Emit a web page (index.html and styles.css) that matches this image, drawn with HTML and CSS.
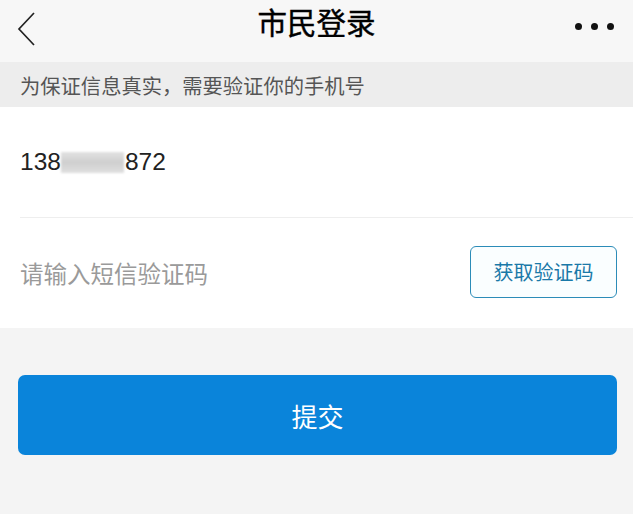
FILE: index.html
```html
<!DOCTYPE html>
<html lang="zh-CN">
<head>
<meta charset="utf-8">
<title>市民登录</title>
<link rel="stylesheet" href="styles.css">
</head>
<body>
<div class="page">
  <header class="topbar">
    <svg class="back" width="20" height="36" viewBox="0 0 20 36">
      <polyline points="17,2 2,18 17,34" fill="none" stroke="#222" stroke-width="1.7"/>
    </svg>
    <h1 class="title">市民登录</h1>
    <div class="more"><span></span><span></span><span></span></div>
  </header>
  <div class="notice">为保证信息真实，需要验证你的手机号</div>
  <div class="form">
    <div class="row phone">
      <span>138</span><span class="mask"></span><span>872</span>
    </div>
    <div class="divider"></div>
    <div class="row code">
      <span class="placeholder">请输入短信验证码</span>
      <button class="getcode">获取验证码</button>
    </div>
  </div>
  <div class="actions">
    <button class="submit">提交</button>
  </div>
</div>
</body>
</html>
```
FILE: styles.css
```css
html, body {
  margin: 0;
  padding: 0;
}
body {
  background: #f4f4f4;
  font-family: "Noto Sans CJK SC", "Noto Sans", sans-serif;
  width: 633px;
  height: 514px;
  overflow: hidden;
}
.page {
  display: flex;
  flex-direction: column;
}
.topbar {
  height: 62px;
  background: #f7f7f7;
  display: flex;
  align-items: center;
  justify-content: center;
  position: relative;
}
.back {
  position: absolute;
  left: 17px;
  top: 11px;
}
.title {
  margin: 0;
  font-size: 29.5px;
  font-weight: 400;
  color: #000;
  line-height: 1;
  margin-top: -18px;
  -webkit-text-stroke: 0.4px #000;
}
.more {
  position: absolute;
  right: 19px;
  top: 23px;
  display: flex;
  gap: 9px;
}
.more span {
  width: 7px;
  height: 7px;
  border-radius: 50%;
  background: #111;
}
.notice {
  height: 45px;
  background: #ededed;
  display: flex;
  align-items: center;
  padding-left: 20px;
  font-size: 20.3px;
  color: #555;
}
.form {
  background: #fff;
  display: flex;
  flex-direction: column;
}
.row {
  height: 110px;
  display: flex;
  align-items: center;
  padding: 0 16px 0 20px;
}
.phone {
  font-family: "Liberation Sans", Arial, sans-serif;
  font-size: 24.5px;
  color: #222;
}
.mask {
  width: 63px;
  height: 21px;
  background: linear-gradient(180deg, #e2e2e2, #cfcfcf 50%, #e0e0e0);
  margin: 0 1px 0 0;
  filter: blur(1px);
}
.divider {
  height: 1px;
  background: #eeeeee;
  margin-left: 20px;
}
.code {
  justify-content: space-between;
}
.placeholder {
  font-size: 23.5px;
  color: #9a9a9a;
}
.getcode {
  width: 147px;
  height: 52px;
  border: 1.5px solid #2c8cb8;
  border-radius: 6px;
  background: #fafeff;
  color: #1a79a8;
  font-family: "Noto Sans CJK SC", sans-serif;
  font-size: 20px;
  padding: 0;
  margin-top: -3px;
}
.actions {
  padding: 47px 16px 0 18px;
  display: flex;
  flex-direction: column;
}
.submit {
  height: 80px;
  border: none;
  border-radius: 7px;
  background: #0a84da;
  color: #fff;
  font-family: "Noto Sans CJK SC", sans-serif;
  font-size: 26px;
  padding: 0;
}
```
